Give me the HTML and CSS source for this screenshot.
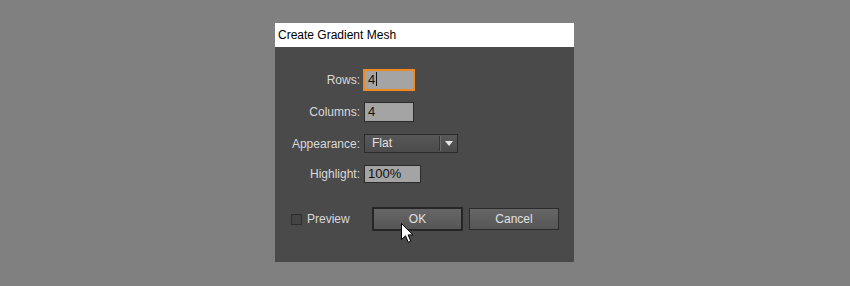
FILE: index.html
```html
<!DOCTYPE html>
<html lang="en">
<head>
    <meta charset="UTF-8">
    <title>Create Gradient Mesh</title>
    <link rel="stylesheet" href="styles.css">
</head>
<body>

    <div class="dialog">
        <div class="title-bar">Create Gradient Mesh</div>

        <div class="dialog-body">
            <div class="fields">
                <label>Rows:</label>
                <div class="field field-focus">4<span class="caret"></span></div>

                <label>Columns:</label>
                <div class="field">4</div>

                <label>Appearance:</label>
                <div class="select">
                    <span class="select-value">Flat</span>
                    <span class="select-arrow"></span>
                </div>

                <label>Highlight:</label>
                <div class="field field-wide">100%</div>
            </div>

            <div class="actions">
                <div class="preview">
                    <span class="checkbox"></span>
                    <span>Preview</span>
                </div>
                <button class="btn btn-default">OK</button>
                <button class="btn">Cancel</button>
            </div>

            <svg class="pointer" width="14" height="21" viewBox="0 0 14 21">
                <path d="M0.5 0.5 L0.5 16.5 L4.5 12.8 L7.3 19.3 L9.8 18.2 L7.1 11.9 L12 11.9 Z"
                      fill="#fff" stroke="#000" stroke-width="1" stroke-linejoin="miter"/>
            </svg>
        </div>
    </div>

</body>
</html>
```

FILE: styles.css
```css
body {
    margin: 0;
    box-sizing: border-box;
    height: 286px;
    padding: 0 1px 1px 0;
    background: #808080;
    font-family: "Liberation Sans", Arial, sans-serif;
    font-size: 12px;
    display: flex;
    justify-content: center;
    align-items: center;
}

.dialog {
    width: 299px;
    height: 239px;
    background: #4a4a4a;
    display: flex;
    flex-direction: column;
}

.title-bar {
    height: 24px;
    line-height: 25px;
    background: #fff;
    color: #000;
    padding-left: 3px;
}

.dialog-body {
    position: relative;
    flex: 1;
    padding-top: 23px;
}

.fields {
    display: grid;
    grid-template-columns: 85px auto;
    column-gap: 4px;
    row-gap: 12px;
    align-items: center;
    justify-items: start;
}

label {
    justify-self: end;
    color: #d9d9d9;
}

.field {
    box-sizing: border-box;
    width: 50px;
    height: 20px;
    line-height: 18px;
    padding-left: 3px;
    background: #a4a4a4;
    border: 1px solid #2b2b2b;
    color: #111;
    font-size: 13px;
}

.field-focus {
    border-color: #f0891f;
    box-shadow: 0 0 0 1px #f0891f;
}

.caret {
    display: inline-block;
    width: 1px;
    height: 14px;
    margin-left: 1px;
    background: #111;
    vertical-align: -2px;
}

.field-wide {
    width: 57px;
    height: 18px;
    line-height: 16px;
}

.select {
    box-sizing: border-box;
    width: 94px;
    height: 19px;
    display: flex;
    align-items: center;
    border: 1px solid #2b2b2b;
    background: linear-gradient(#585858, #4b4b4b);
    color: #e2e2e2;
}

.select-value {
    flex: 1;
    padding-left: 7px;
    border-right: 1px solid #343434;
    box-shadow: 1px 0 0 #6a6a6a;
    line-height: 15px;
}

.select-arrow {
    width: 17px;
    display: flex;
    justify-content: center;
}

.select-arrow::before {
    content: "";
    border-left: 4px solid transparent;
    border-right: 4px solid transparent;
    border-top: 5px solid #e6e6e6;
}

.actions {
    display: flex;
    align-items: center;
    margin-top: 24px;
    padding-left: 16px;
}

.preview {
    display: flex;
    align-items: center;
    gap: 5px;
    width: 81px;
    color: #d9d9d9;
}

.checkbox {
    box-sizing: border-box;
    width: 11px;
    height: 11px;
    border: 1px solid #2e2e2e;
    background: #444;
}

.btn {
    box-sizing: border-box;
    width: 90px;
    height: 22px;
    margin-right: 6px;
    border: 1px solid #2b2b2b;
    background: linear-gradient(#666, #565656);
    color: #e0e0e0;
    font-family: "Liberation Sans", Arial, sans-serif;
    font-size: 12px;
    padding: 0;
}

.btn-default {
    width: 91px;
    height: 24px;
    border: 2px solid #262626;
}

.pointer {
    position: absolute;
    left: 126px;
    top: 176px;
}
```
